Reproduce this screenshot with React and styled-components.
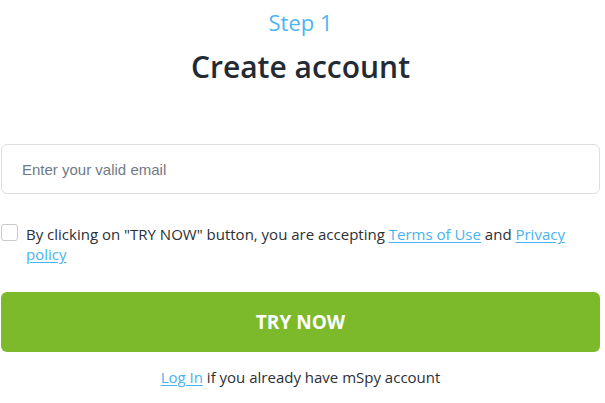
import React from "react";
import styled, { createGlobalStyle } from "styled-components";

const GlobalStyle = createGlobalStyle`
  html, body {
    margin: 0;
    padding: 0;
    background: #fff;
  }
  body {
    font-family: "Open Sans", "Liberation Sans", sans-serif;
    color: #2b2f36;
  }
`;

const Wrap = styled.div`
  width: 599px;
  margin-left: 1px;
  display: flex;
  flex-direction: column;
`;

const Step = styled.div`
  text-align: center;
  font-size: 22px;
  line-height: 30px;
  margin-top: 7px;
  color: #4db6f2;
`;

const Title = styled.h1`
  margin: 12px 0 0;
  text-align: center;
  font-size: 30px;
  line-height: 36px;
  font-weight: 600;
  color: #232a33;
`;

const EmailInput = styled.input`
  box-sizing: border-box;
  margin-top: 59px;
  width: 100%;
  height: 50px;
  padding: 0 20px;
  border: 1px solid #dedede;
  border-radius: 6px;
  font-family: "Liberation Sans", Arial, sans-serif;
  font-size: 15px;
  color: #333;
  outline: none;

  &::placeholder {
    color: #707a85;
  }
`;

const Agree = styled.label`
  display: flex;
  gap: 8px;
  margin-top: 30px;
  font-size: 15px;
  line-height: 20px;
  color: #2b2f36;
`;

const Box = styled.span`
  flex: none;
  box-sizing: border-box;
  width: 17px;
  height: 17px;
  border: 1px solid #c9c9c9;
  border-radius: 3px;
  background: #fff;
`;

const Link = styled.a`
  color: #48b3ef;
  text-decoration: underline;
  text-underline-offset: 2px;
`;

const Button = styled.button`
  margin-top: 28px;
  height: 60px;
  border: none;
  border-radius: 6px;
  background: #7cba2b;
  color: #fff;
  font-family: "Open Sans", sans-serif;
  font-weight: 700;
  font-size: 19px;
`;

const LoginLine = styled.p`
  margin: 15px 0 0;
  text-align: center;
  font-size: 15px;
  line-height: 20px;
  color: #2b2f36;
`;

export default function App() {
  return (
    <>
      <GlobalStyle />
      <Wrap>
        <Step>Step 1</Step>
        <Title>Create account</Title>
        <EmailInput type="email" placeholder="Enter your valid email" />
        <Agree>
          <Box />
          <span>
            By clicking on "TRY NOW" button, you are accepting{" "}
            <Link href="#">Terms of Use</Link> and{" "}
            <Link href="#">Privacy policy</Link>
          </span>
        </Agree>
        <Button>TRY NOW</Button>
        <LoginLine>
          <Link href="#">Log In</Link> if you already have mSpy account
        </LoginLine>
      </Wrap>
    </>
  );
}
